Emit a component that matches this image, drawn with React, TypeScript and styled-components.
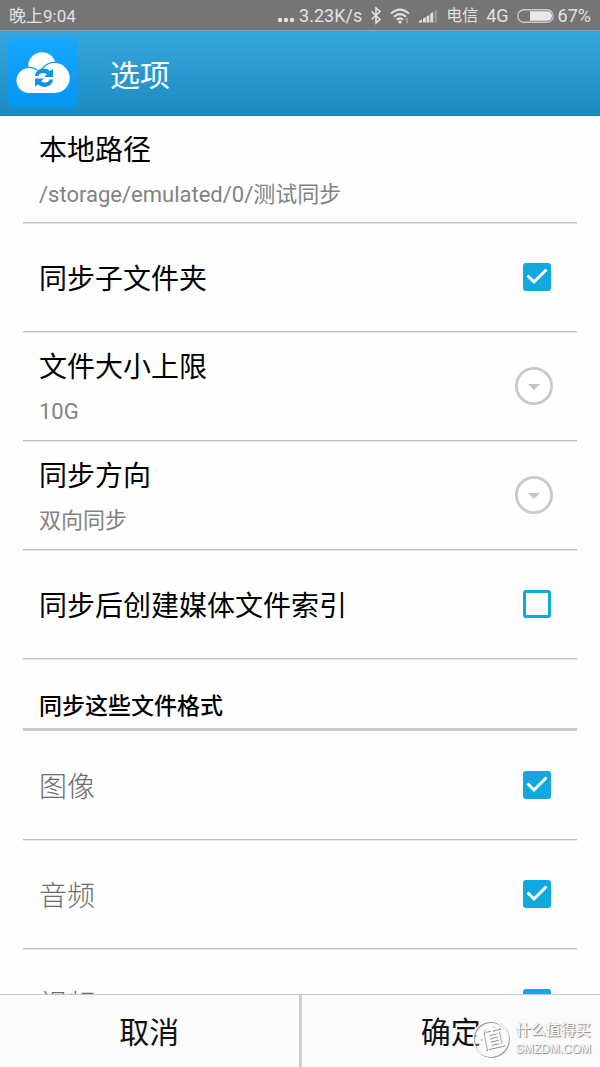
import React, { useState } from "react";
import styled, { createGlobalStyle } from "styled-components";

const GlobalStyle = createGlobalStyle`
  * { box-sizing: border-box; }
  body {
    margin: 0;
    background: #fefefe;
    font-family: Roboto, "Noto Sans CJK SC", sans-serif;
    color: #000;
  }
`;

const Screen = styled.div`
  display: flex;
  flex-direction: column;
  height: 100vh;
  overflow: hidden;
  position: relative;
`;

const StatusBar = styled.div`
  display: flex;
  flex: none;
  align-items: center;
  justify-content: space-between;
  height: 31px;
  padding: 2px 9px 0;
  background: #757575;
  border-bottom: 1px solid #8aa4b0;
  color: #e2e2e2;
  line-height: 28px;
`;

const StatusGroup = styled.div`
  display: flex;
  align-items: center;
  gap: 8px;
`;

const StatusPair = styled.div`
  display: flex;
  align-items: center;
  gap: 4px;
`;

const StatusText = styled.span<{ $size?: number }>`
  font-size: ${(p) => p.$size ?? 18}px;
  white-space: nowrap;
`;

const Header = styled.header`
  display: flex;
  flex: none;
  align-items: center;
  gap: 32px;
  height: 85px;
  padding: 0 8px;
  background: linear-gradient(#36a8dd, #1c8ac0);
  border-bottom: 1px solid #1784b8;
`;

const Title = styled.h1`
  margin: 0;
  padding-top: 6px;
  color: #fff;
  font-size: 30px;
  font-weight: 400;
  line-height: 40px;
`;

const Content = styled.main`
  flex: 1;
  min-height: 0;
  overflow-y: auto;
  scrollbar-width: none;
  padding: 0 23px;
`;

const Row = styled.div`
  display: flex;
  align-items: center;
  justify-content: space-between;
  height: 109px;
  padding: 0 24px 0 16px;
  border-bottom: 1px solid #c0c0c0;
  box-shadow: 0 1px #e6e6e6;
  &:first-child { height: 107px; }
`;

const RowText = styled.div`
  display: flex;
  flex: 1;
  flex-direction: column;
  gap: 10px;
  padding-top: 6px;
`;

const RowLabel = styled.label`
  font-size: 28px;
  line-height: 36px;
`;

const CheckLabel = styled(RowLabel)<{ $muted?: boolean }>`
  padding-top: 6px;
  color: ${(p) => (p.$muted ? "#6c6c6c" : "#000")};
  font-weight: ${(p) => (p.$muted ? 300 : 400)};
`;

const RowTitle = styled.span`
  font-size: 28px;
  line-height: 36px;
`;

const RowValue = styled.span`
  font-size: 22px;
  line-height: 32px;
  color: #828282;
`;

const Select = styled.select`
  appearance: none;
  width: 100%;
  height: 32px;
  margin: 0;
  padding: 0;
  border: 0;
  background: transparent;
  color: #828282;
  font-family: inherit;
  font-size: 22px;
  line-height: 32px;
`;

const SectionTitle = styled.h2`
  margin: 0;
  padding: 32px 16px 5px;
  border-bottom: 3px solid #cbcbcb;
  font-size: 23px;
  font-weight: 500;
  line-height: 32px;
`;

const TickBox = styled.span`
  display: grid;
  margin-right: 2px;
  > * { grid-area: 1 / 1; }
  > svg { visibility: hidden; pointer-events: none; }
  > input:checked + svg { visibility: visible; }
`;

const TickInput = styled.input`
  appearance: none;
  width: 28px;
  height: 28px;
  margin: 0;
  border: 3px solid #0fa9e0;
  border-radius: 3px;
  background: #fff;
  &:checked { background: #0fa9e0; }
`;

const Footer = styled.footer`
  display: flex;
  flex: none;
  height: 73px;
  border-top: 1px solid #c8c8c8;
  background: #fbfbfb;
`;

const FooterButton = styled.button`
  flex: 1;
  padding: 4px 0 0;
  border: 0;
  background: transparent;
  color: #111;
  font-family: inherit;
  font-size: 30px;
  line-height: 40px;
  & + & { border-left: 3px solid #cecece; }
`;

const Watermark = styled.div`
  position: absolute;
  right: 9px;
  bottom: 8px;
  display: flex;
  align-items: center;
  gap: 4px;
  pointer-events: none;
`;

const WatermarkText = styled.div`
  display: flex;
  flex-direction: column;
  color: #fff;
  font-weight: 500;
  text-shadow: 1px 1px 1px #888, 0 0 1px #aaa;
`;

const WatermarkName = styled.span`
  font-size: 15px;
  line-height: 20px;
`;

const WatermarkSite = styled.span`
  font-family: "Liberation Sans", sans-serif;
  font-size: 12px;
  line-height: 18px;
`;

const Dots = () => (
  <svg width="18" height="20" viewBox="0 0 18 20" fill="#e2e2e2" aria-hidden="true">
    <circle cx="3" cy="14" r="2.2" /><circle cx="9" cy="14" r="2.2" /><circle cx="15" cy="14" r="2.2" />
  </svg>
);

const Bluetooth = () => (
  <svg width="12" height="18" viewBox="0 0 12 18" fill="none" stroke="#e2e2e2" strokeWidth="1.6" aria-hidden="true">
    <path d="M1.500 4.500 10 12.500 6 16V1L10 4.500 1.500 12.500" />
  </svg>
);

const Wifi = () => (
  <svg width="21" height="16" viewBox="0 0 21 16" fill="none" stroke="#e2e2e2" strokeWidth="2" aria-hidden="true">
    <path d="M1 5.500Q10 -2.500 19 5.500M4 8.800Q10 3.400 16 8.800M6.800 11.800Q10 9 13.200 11.800" />
    <circle cx="10" cy="14" r="1.600" fill="#e2e2e2" stroke="none" />
    <path d="M17 10v5" stroke="#a0a0a0" />
  </svg>
);

const Signal = () => (
  <svg width="19" height="14" viewBox="0 0 19 14" fill="#e2e2e2" aria-hidden="true">
    <path d="M0 13.500v-1.500l3-1.500v3zM4 13.500V9.500l2.800-1.200v5.200zM7.600 13.500V7.500l2.800-1.500v7.500zM11.300 13.500V4.500L14.200 3v10.500z" />
    <path d="M15.500 13.500V2L18 .5v13z" fill="#969696" />
  </svg>
);

const Battery = () => (
  <svg width="37" height="14" viewBox="0 0 37 14" aria-hidden="true">
    <rect x=".75" y=".75" width="35.500" height="12.500" rx="6.250" fill="none" stroke="#c8c8c8" strokeWidth="1.300" />
    <path d="M13 2.200h17.200a4.800 4.800 0 0 1 0 9.600H13z" fill="#e8e8e8" />
  </svg>
);

const AppLogo = () => (
  <svg width="70" height="70" viewBox="0 0 70 70" aria-hidden="true">
    <defs>
      <linearGradient id="tile" x1="0" y1="0" x2="0" y2="1">
        <stop offset="0" stopColor="#16a8ff" /><stop offset="1" stopColor="#0496f0" />
      </linearGradient>
    </defs>
    <rect width="70" height="70" rx="6" fill="url(#tile)" />
    <circle cx="34" cy="28" r="13.800" fill="#fff" />
    <g fill="none" stroke="#0d9ff8" strokeWidth="2.400">
      <circle cx="21" cy="42.500" r="12.500" />
      <circle cx="46.700" cy="40" r="15" />
    </g>
    <g fill="#fff">
      <circle cx="21" cy="42.500" r="12.500" />
      <circle cx="46.700" cy="40" r="15" />
      <path d="M21 55V37l6-4 11-2 9 4v20z" />
    </g>
    <path id="arrow" d="M27 38C28 30.500 36.500 28.500 42 33L45 31V39H36L39 36.300C35.500 34 31 35 30.500 38Z" fill="#0d95e4" />
    <use href="#arrow" transform="rotate(180 36 39.800)" />
  </svg>
);

const DropIcon = () => (
  <svg width="38" height="38" viewBox="0 0 38 38" aria-hidden="true">
    <circle cx="19" cy="19" r="17.600" fill="#fff" stroke="#c9c9c9" strokeWidth="2.800" />
    <path d="M13 17h12l-6 6z" fill="#c4c4c4" />
  </svg>
);

const Seal = () => (
  <svg width="40" height="40" viewBox="0 0 40 40" aria-hidden="true">
    <circle cx="19.500" cy="20.500" r="17.500" fill="#fff" fillOpacity=".3" stroke="#999" strokeWidth="1.800" />
    <circle cx="18.700" cy="19.700" r="17.500" fill="none" stroke="#fff" strokeWidth="1.500" />
    <g fontFamily="Noto Sans CJK SC, sans-serif" fontSize="24" fontWeight="500" transform="rotate(-12 19 20)">
      <text x="8" y="29" fill="#8c8c8c">值</text>
      <text x="7" y="28" fill="#fff">值</text>
    </g>
  </svg>
);

function CheckRow({ id, label, checked, muted }: { id: string; label: string; checked?: boolean; muted?: boolean }) {
  return (
    <Row>
      <CheckLabel htmlFor={id} $muted={muted}>{label}</CheckLabel>
      <TickBox>
        <TickInput id={id} type="checkbox" defaultChecked={checked} />
        <svg width="28" height="28" viewBox="0 0 28 28" fill="none" stroke="#fff" strokeWidth="3" aria-hidden="true">
          <path d="M4.500 12.500 11 19 23.500 6.500" />
        </svg>
      </TickBox>
    </Row>
  );
}

function SelectRow({ id, label, options }: { id: string; label: string; options: string[] }) {
  const [value, setValue] = useState(options[0]);
  return (
    <Row>
      <RowText>
        <RowLabel htmlFor={id}>{label}</RowLabel>
        <Select id={id} value={value} onChange={(e) => setValue(e.target.value)}>
          {options.map((o) => <option key={o}>{o}</option>)}
        </Select>
      </RowText>
      <DropIcon />
    </Row>
  );
}

export default function App() {
  return (
    <Screen>
      <GlobalStyle />
      <StatusBar>
        <StatusText $size={17}>晚上9:04</StatusText>
        <StatusGroup>
          <StatusPair><Dots /><StatusText>3.23K/s</StatusText></StatusPair>
          <Bluetooth />
          <Wifi />
          <Signal />
          <StatusText $size={16}>电信</StatusText>
          <StatusText>4G</StatusText>
          <StatusPair><Battery /><StatusText>67%</StatusText></StatusPair>
        </StatusGroup>
      </StatusBar>
      <Header>
        <AppLogo />
        <Title>选项</Title>
      </Header>
      <Content>
        <Row>
          <RowText>
            <RowTitle>本地路径</RowTitle>
            <RowValue>/storage/emulated/0/测试同步</RowValue>
          </RowText>
        </Row>
        <CheckRow id="subfolders" label="同步子文件夹" checked />
        <SelectRow id="limit" label="文件大小上限" options={["10G"]} />
        <SelectRow id="direction" label="同步方向" options={["双向同步"]} />
        <CheckRow id="index" label="同步后创建媒体文件索引" />
        <SectionTitle>同步这些文件格式</SectionTitle>
        <CheckRow id="image" label="图像" checked muted />
        <CheckRow id="audio" label="音频" checked muted />
        <CheckRow id="video" label="视频" checked muted />
      </Content>
      <Footer>
        <FooterButton type="button">取消</FooterButton>
        <FooterButton type="button">确定</FooterButton>
      </Footer>
      <Watermark>
        <Seal />
        <WatermarkText>
          <WatermarkName>什么值得买</WatermarkName>
          <WatermarkSite>SMZDM.COM</WatermarkSite>
        </WatermarkText>
      </Watermark>
    </Screen>
  );
}
